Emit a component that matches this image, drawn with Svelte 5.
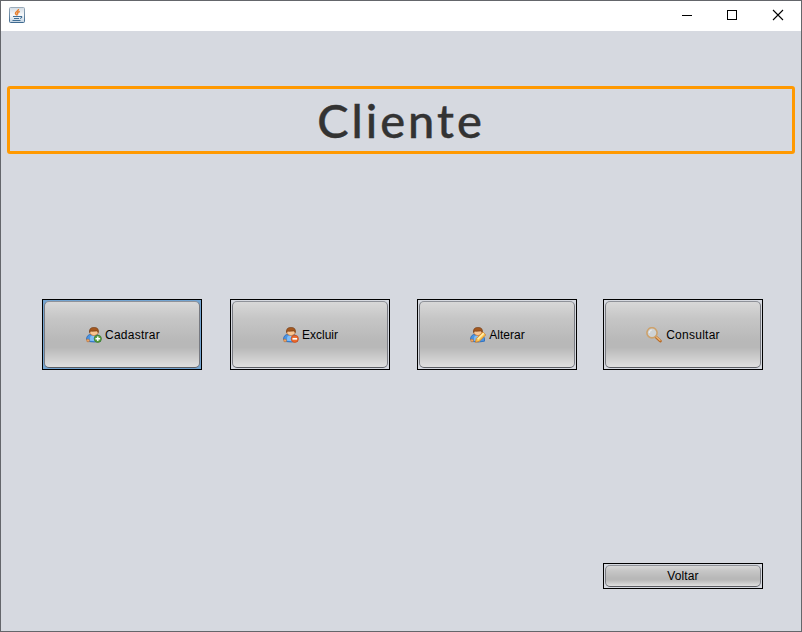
<script>
  const actions = [
    { label: 'Cadastrar', icon: 'add', focused: true },
    { label: 'Excluir', icon: 'remove' },
    { label: 'Alterar', icon: 'edit' },
    { label: 'Consultar', icon: 'search' }
  ];
</script>

<main class="window">
  <header>
    <svg class="java" width="16" height="16" viewBox="0 0 16 16">
      <defs>
        <linearGradient id="tile" x1="0" y1="0" x2="0" y2="1">
          <stop offset="0" stop-color="#9aabba" />
          <stop offset="1" stop-color="#3f6a90" />
        </linearGradient>
        <linearGradient id="face" x1="0" y1="0" x2="0" y2="1">
          <stop offset="0" stop-color="#d3dce4" />
          <stop offset=".5" stop-color="#f7f9fb" />
          <stop offset="1" stop-color="#c3d3e1" />
        </linearGradient>
      </defs>
      <rect x=".5" y=".5" width="15" height="15" rx="1" fill="url(#face)" stroke="url(#tile)" />
      <path d="M9.500 2C10 4 6 4.500 6.500 6.500C6.700 7.500 8 8 8 8.500M10.800 4.500C8 5.300 8 6 9 7.500" fill="none" stroke="#e77f2e" stroke-width="1.500" />
      <path d="M4 9.500h7M5 11.500h5M3.500 13.500h8M11 9.500h1.500q1 1-1.500 2" fill="none" stroke="#416f95" stroke-width="1.200" />
    </svg>
    <div class="controls">
      <svg width="46" height="30" viewBox="0 0 46 30" shape-rendering="crispEdges"><path d="M18 14.500h10" stroke="#000" /></svg>
      <svg width="45" height="30" viewBox="0 0 45 30" shape-rendering="crispEdges"><path d="M17.500 9.500h9v9h-9z" fill="none" stroke="#000" /></svg>
      <svg width="46" height="30" viewBox="0 0 46 30"><path d="M18 9l10 10M28 9l-10 10" stroke="#000" stroke-width="1.100" /></svg>
    </div>
  </header>

  <h1><span>Cliente</span></h1>

  <nav>
    {#each actions as action}
      <button class={action.icon} class:focused={action.focused}>
        <span class="face">
          <svg width="16" height="16" viewBox="0 0 16 16">
            {#if action.icon === 'search'}
              <path d="M10.500 10.500l3.800 3.500" stroke="#b96c28" stroke-width="3" stroke-linecap="round" />
              <path d="M10.500 10l3.500 3.300" stroke="#f0b877" stroke-width="1.200" stroke-linecap="round" />
              <circle cx="6" cy="5.800" r="5.100" fill="#cfd3d6" stroke="#cda26c" stroke-width="1.600" />
              <path d="M3.300 6q0-2.500 2.500-3" fill="none" stroke="#e9ecee" stroke-width="1.200" />
            {:else}
              <path d="M.5 12.500C.5 9 2.500 7.500 5 7.200h5q3.500.7 4.500 4v3q-6 1.500-12 .3z" fill="#4a94e2" stroke="#2866b5" stroke-width=".8" />
              <path d="M4 13.800l.2-4L6 8.500l4 1.500v4.200z" fill="#7fbdf8" />
              <path d="M.5 12.200h2.300l1 1.700-1 .8H1z" fill="#f0a765" stroke="#b0652c" stroke-width=".5" />
              <path d="M5.400 7.600l2.500 2 2.500-2z" fill="#eef6ff" />
              <path d="M4 3.500h8v2.800Q11 8.600 8 8.600T4 6.300z" fill="#fac692" stroke="#b0652c" stroke-width=".7" />
              <path d="M3.500 5.500Q2.800.4 8 .4T12.300 5.500L11.300 3.900 6 4.300 4.500 4z" fill="#a4581f" stroke="#71370f" stroke-width=".6" />
              {#if action.icon === 'add'}
                <circle cx="11.800" cy="11.800" r="3.600" fill="#5da044" stroke="#397b28" stroke-width=".8" />
                <path d="M9.500 11.800h4.600M11.800 9.500v4.600" stroke="#fff" stroke-width="1.400" />
              {:else if action.icon === 'remove'}
                <circle cx="11.800" cy="11.800" r="3.600" fill="#ed6c2d" stroke="#c84a1d" stroke-width=".8" />
                <path d="M9.500 11.800h4.600" stroke="#fff" stroke-width="1.700" />
              {:else}
                <path d="M5.500 15.300l.8-3.800 6.500-6.500 2.900 2.900-6.500 6.500z" fill="#fbc653" stroke="#d07b24" stroke-width=".8" />
                <path d="M7.700 12.300l6-6" stroke="#fff0b0" stroke-width="1.600" />
              {/if}
            {/if}
          </svg>
          <span class="label">{action.label}</span>
        </span>
      </button>
    {/each}
  </nav>

  <footer>
    <button class="back"><span class="face">Voltar</span></button>
  </footer>
</main>

<style>
  :global(body) { margin: 0; }
  .window {
    box-sizing: border-box;
    width: 802px;
    height: 632px;
    border: 1px solid #64666b;
    background: #d6d9e0;
    font: 12px 'Liberation Sans', Arial, sans-serif;
    overflow: hidden;
  }
  header {
    display: flex;
    justify-content: space-between;
    height: 30px;
    background: #fff;
  }
  svg { display: block; flex: none; }
  .java { margin: 6px 0 0 8px; }
  .controls { display: flex; }
  h1 {
    box-sizing: border-box;
    display: flex;
    justify-content: center;
    width: 788px;
    height: 68px;
    margin: 55px 6px 0;
    border: 3px solid #ff9900;
    border-radius: 3px;
    color: #333;
    font: 500 47px/62px Lato, sans-serif;
    letter-spacing: 3px;
    -webkit-text-stroke: .4px #333;
  }
  nav {
    display: flex;
    margin: 145px 0 0 41px;
  }
  .remove { margin-left: 28px; }
  .edit { margin-left: 27px; }
  .search { margin-left: 26px; }
  button {
    box-sizing: border-box;
    display: flex;
    width: 160px;
    height: 71px;
    padding: 1px;
    border: 1px solid #000;
    background: #d6d9e0;
    color: #000;
    font: inherit;
  }
  .face {
    flex: 1;
    display: flex;
    align-items: center;
    justify-content: center;
    gap: 3px;
    border: 1px solid;
    border-color: #8f9299 #777980 #5a5c62;
    border-radius: 5px;
    background: linear-gradient(#d8d8d8, #c6c6c6 25%, #b8b8b8 60%, #b8b8b8 70%, #dfdfdf);
  }
  .add .label, .search .label { letter-spacing: .25px; }
  .add .face { padding-left: 2px; }
  .remove .face, .edit .face { padding-left: 1px; }
  .search .face { gap: 4px; }
  .focused { background: #73a4d1; }
  footer {
    display: flex;
    justify-content: flex-end;
    margin: 193px 38px 0 0;
  }
  .back { height: 26px; letter-spacing: .1px; }
</style>
